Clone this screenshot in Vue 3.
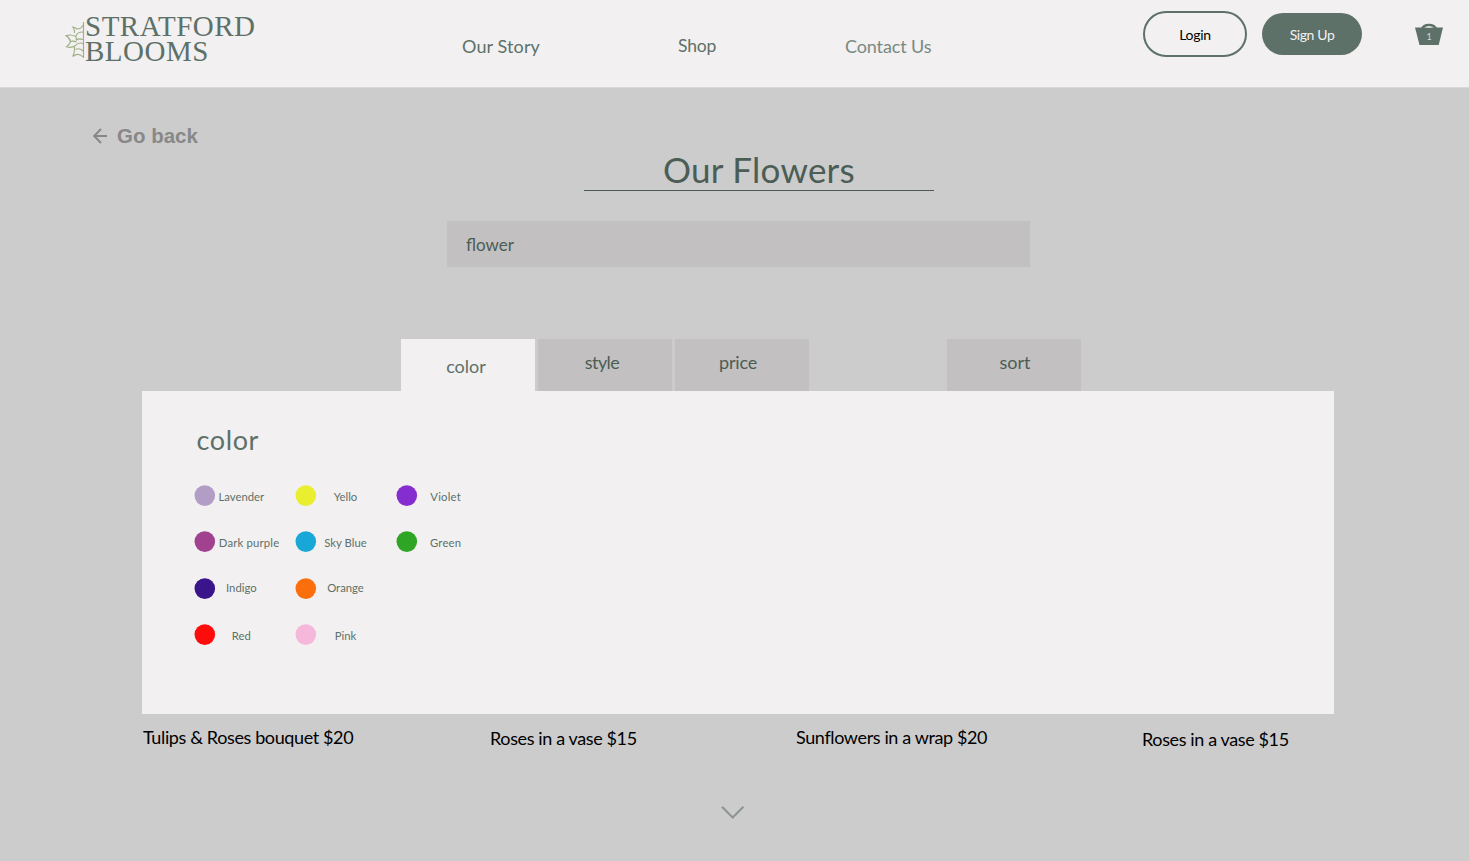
<script setup>
const colors = [
  [
    { name: 'Lavender', hex: '#b29dc6', cls: 'lavender' },
    { name: 'Yello', hex: '#e9ee2e', cls: 'yello' },
    { name: 'Violet', hex: '#862dcf', cls: 'violet' },
  ],
  [
    { name: 'Dark purple', hex: '#a14291', cls: 'dark-purple' },
    { name: 'Sky Blue', hex: '#18a8d8', cls: 'sky-blue' },
    { name: 'Green', hex: '#2fa526', cls: 'green' },
  ],
  [
    { name: 'Indigo', hex: '#3a148a', cls: 'indigo' },
    { name: 'Orange', hex: '#fa6f0b', cls: 'orange' },
  ],
  [
    { name: 'Red', hex: '#fe0b0b', cls: 'red' },
    { name: 'Pink', hex: '#f6b8da', cls: 'pink' },
  ],
]
const tabs = [
  { label: 'color', cls: 'active' },
  { label: 'style', cls: 'style' },
  { label: 'price', cls: 'price' },
  { label: 'sort', cls: 'sort' },
]
</script>

<template>
  <div class="page">
    <header class="header">
      <div class="logo">
        <svg class="leaf" viewBox="0 0 20 38" width="20" height="38">
          <path d="M18.500 1V37" />
          <path d="M18 4.200Q16 8 12 8Q10.500 6.500 7.800 6Q9.800 8.500 9.500 12" />
          <path d="M18 11.200Q14 10.500 11.500 13.500Q10.300 16 11.500 19Q14 17 18 18.500" />
          <path d="M10.800 15.500Q6 13 1 14.800Q4.500 16.500 5.500 20.500Q8.500 19.500 11.500 21" />
          <path d="M5.500 20.500Q4.500 24 1.500 25.800Q6.500 27.500 10.500 24.500Q13 21 18 22.500" />
          <path d="M9.500 26Q10 31 7.800 35.500Q13 31 18 35.800M10.500 28.500Q14.500 26.500 18 30" />
        </svg>
        <div class="wordmark"><span class="w1">STRATFORD</span><span class="w2">BLOOMS</span></div>
      </div>
      <nav class="nav">
        <a class="story">Our Story</a>
        <a class="shop">Shop</a>
        <a class="contact">Contact Us</a>
      </nav>
      <button class="login"><span>Login</span></button>
      <button class="signup"><span>Sign Up</span></button>
      <div class="basket">
        <svg viewBox="0 0 28 22" width="28" height="22">
          <path d="M0 4.500H28L23.700 22H4.500Z" fill="#5d7168" />
          <path d="M7 6A7.200 5.300 0 0 1 21 6" fill="none" stroke="#5d7168" stroke-width="2.400" />
          <path d="M10.800 4.500Q14 2.400 17.200 4.500Z" fill="#f2f0f1" />
        </svg>
        <span>1</span>
      </div>
    </header>

    <main>
      <a class="back">
        <svg viewBox="0 0 14 16" width="14" height="16"><path d="M14 8H1.500M8 1L1.200 8L8 15" /></svg>
        <span>Go back</span>
      </a>
      <h1><span>Our Flowers</span></h1>
      <div class="search"><span>flower</span></div>
      <div class="tabs">
        <div v-for="t in tabs" :key="t.label" class="tab" :class="t.cls"><span>{{ t.label }}</span></div>
      </div>
      <section class="panel">
        <h2>color</h2>
        <div v-for="(row, i) in colors" :key="i" class="row">
          <div v-for="c in row" :key="c.name" class="swatch">
            <svg viewBox="0 0 22 22" width="22" height="22"><circle cx="10.800" cy="10.600" r="10.300" :fill="c.hex" /></svg>
            <span :class="c.cls">{{ c.name }}</span>
          </div>
        </div>
      </section>
      <div class="products">
        <span class="p1">Tulips &amp; Roses bouquet $20</span>
        <span class="p2">Roses in a vase $15</span>
        <span class="p3">Sunflowers in a wrap $20</span>
        <span class="p4">Roses in a vase $15</span>
      </div>
      <svg class="chevron" viewBox="0 0 24 14" width="24" height="14"><path d="M1 1.800L11.700 12.500L22.400 1.800" /></svg>
    </main>
  </div>
</template>

<style>
body {
  background: #cccccc;
}
</style>

<style scoped>
.page {
  width: 1469px;
  height: 861px;
  overflow: hidden;
  background: #cccccc;
  color: #5d7168;
  font-family: Lato, sans-serif;
  font-size: 18px;
  line-height: 20px;
}
span, a { white-space: nowrap; }
.header {
  display: flex;
  align-items: flex-start;
  height: 88px;
  background: #f2f0f1;
  border-bottom: 1px solid #d8d8d8;
  box-sizing: border-box;
}
.logo {
  display: flex;
  width: 397px;
  padding-left: 65px;
  flex: none;
}
.leaf {
  flex: none;
  margin-top: 21px;
}
.leaf path {
  fill: none;
  stroke: #9caf85;
  stroke-width: 1.100;
}
.wordmark {
  display: flex;
  flex-direction: column;
  padding-top: 14px;
  font-family: "Liberation Serif", serif;
  font-size: 29px;
  line-height: 24px;
  letter-spacing: 0.500px;
}
.w2 { margin-top: 1px; }
.nav {
  display: flex;
  width: 681px;
  flex: none;
}
.nav a { flex: none; margin-top: 36px; }
.nav .story { width: 216px; letter-spacing: 0.120px; }
.nav .shop { width: 167px; font-size: 17.500px; letter-spacing: -0.200px; }
.nav .contact { color: #788981; letter-spacing: -0.120px; }
button {
  font: 14px/20px Lato, sans-serif;
  padding: 1px 0 0;
  border: 0;
  box-sizing: border-box;
  flex: none;
}
.login {
  width: 104px;
  height: 46px;
  margin-top: 11px;
  border: 2px solid #5d7168;
  border-radius: 23px;
  background: transparent;
  color: #000;
  letter-spacing: -0.300px;
}
.signup {
  width: 100px;
  height: 42px;
  margin: 13px 0 0 15px;
  border-radius: 21px;
  background: #5d7168;
  color: #f2f0f1;
  letter-spacing: -0.400px;
}
.basket {
  position: relative;
  width: 28px;
  height: 22px;
  margin: 23px 0 0 53px;
}
.basket svg { display: block; }
.basket span {
  position: absolute;
  left: 0;
  top: 8px;
  width: 28px;
  text-align: center;
  font: 9px/12px Lato, sans-serif;
  color: #d5dad7;
}
.back {
  display: flex;
  align-items: center;
  height: 24px;
  padding: 36px 0 0 93px;
  gap: 10px;
  color: #888;
  font: bold 20.500px/24px "Liberation Sans", sans-serif;
}
.back path {
  fill: none;
  stroke: #888;
  stroke-width: 2;
}
h1 {
  width: 350px;
  height: 42px;
  margin: 0 0 0 584px;
  border-bottom: 1px solid #4b5d55;
  color: #4b5d55;
  font-size: 35px;
  line-height: 42px;
  font-weight: 400;
  letter-spacing: 0.250px;
  text-align: center;
}
.search {
  width: 564px;
  height: 46px;
  margin: 30px 0 0 447px;
  padding-left: 19px;
  background: #c2c0c1;
  color: #4b5d55;
  font-size: 17px;
  line-height: 47px;
}
.tabs {
  display: flex;
  gap: 3px;
  margin: 72px 0 0 401px;
  height: 52px;
}
.tab {
  width: 134px;
  background: #c2c0c1;
  color: #4b5d55;
  text-align: center;
  line-height: 46px;
}
.tab.active {
  background: #f2f0f1;
  color: #5d7168;
  line-height: 54px;
}
.active span { margin-right: 4px; }
.style span { margin-right: 6px; letter-spacing: -0.600px; }
.price span { margin-right: 8px; letter-spacing: -0.200px; }
.sort span { margin-left: 2px; }
.tab.sort { margin-left: 135px; }
.panel {
  width: 1140px;
  height: 323px;
  margin-left: 142px;
  padding-left: 52px;
  background: #f2f0f1;
  overflow: hidden;
}
h2 {
  height: 30px;
  margin: 34px 0 30px 2.500px;
  font-size: 27px;
  line-height: 29px;
  font-weight: 400;
  letter-spacing: 0.600px;
}
.row {
  display: flex;
  height: 46.300px;
}
.swatch {
  display: flex;
  width: 101px;
  align-items: flex-start;
}
.swatch svg {
  flex: none;
}
.swatch span {
  width: 61px;
  margin-top: 4px;
  flex: none;
  text-align: center;
  font-size: 11.300px;
  line-height: 16px;
}
.swatch .lavender, .swatch .indigo, .swatch .red { margin-left: -5.200px; }
.swatch .dark-purple { margin-left: 2.600px; letter-spacing: 0.180px; }
.swatch .yello, .swatch .sky-blue, .swatch .orange, .swatch .pink { margin-left: -2px; }
.swatch .violet, .swatch .green { margin-left: -2.900px; letter-spacing: 0.200px; }
.swatch .indigo, .swatch .orange { margin-top: 2px; }
.products {
  display: flex;
  align-items: flex-start;
  height: 40px;
  padding: 13px 0 0 143px;
  color: #000;
  letter-spacing: -0.380px;
}
.products span { flex: none; }
.p1 { width: 347px; }
.p2 { width: 306px; margin-top: 1px; }
.p3 { width: 346px; }
.p4 { margin-top: 2px; }
.chevron {
  display: block;
  margin: 38px 0 0 721px;
}
.chevron path {
  fill: none;
  stroke: #8d9491;
  stroke-width: 2;
}
</style>
